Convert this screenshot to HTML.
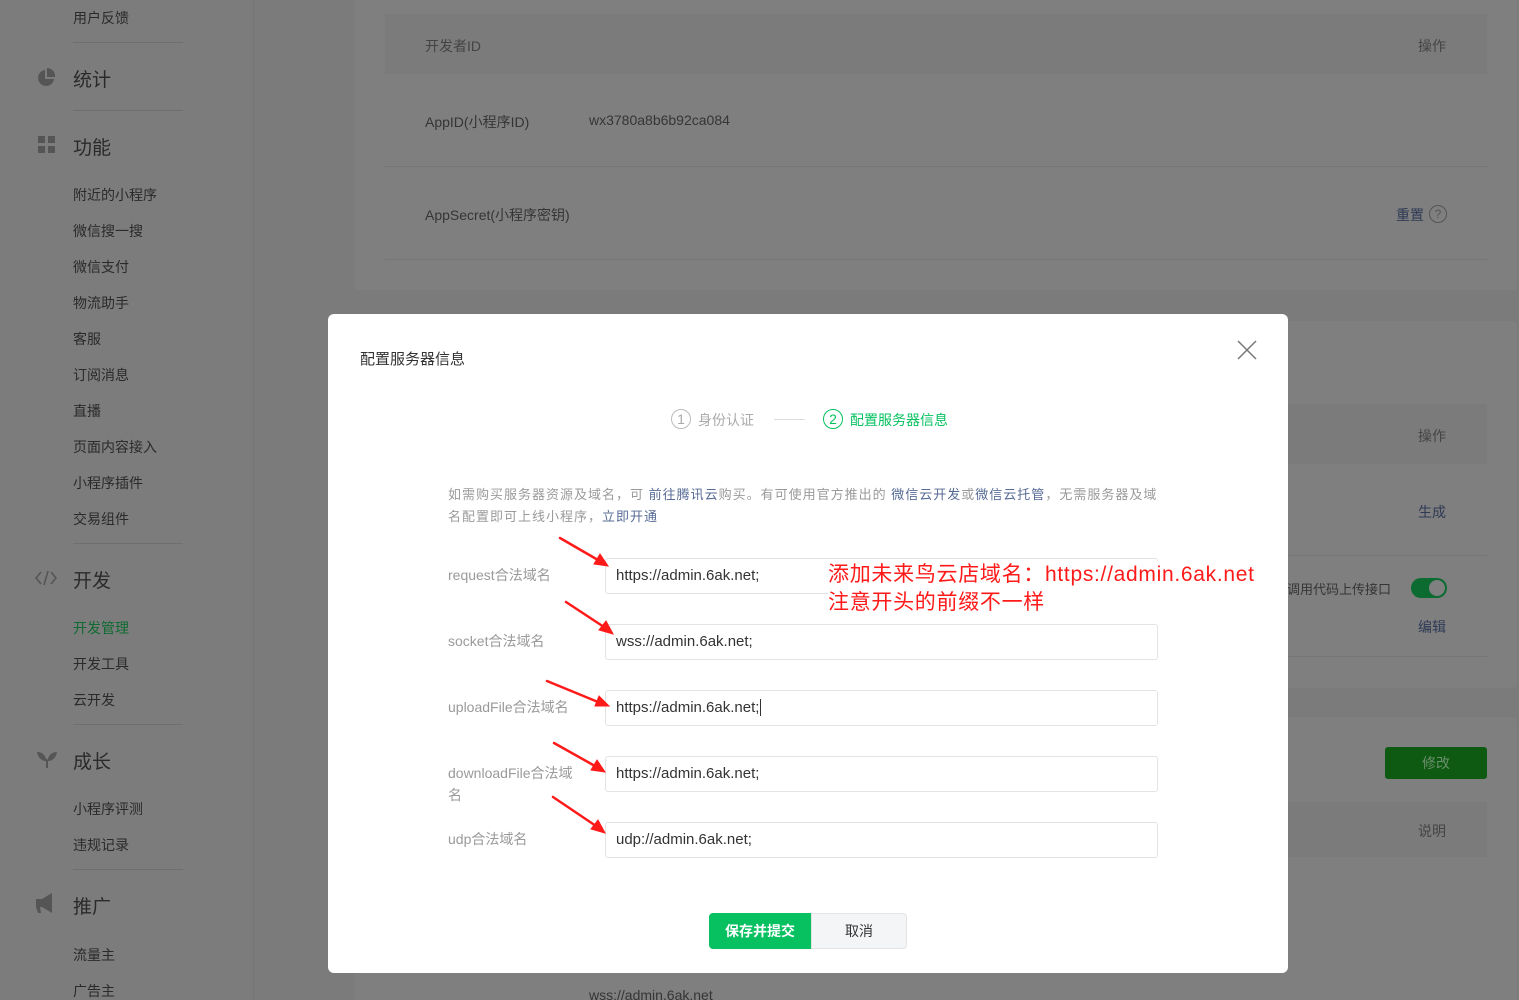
<!DOCTYPE html>
<html><head><meta charset="utf-8">
<style>
*{margin:0;padding:0;box-sizing:border-box}
html,body{width:1519px;height:1000px;overflow:hidden}
body{background:#7a7b7a;font-family:"Liberation Sans","Noto Sans CJK SC",sans-serif;position:relative;color:#2e2e2e}
.a{position:absolute;white-space:nowrap}
.side{position:absolute;left:0;top:0;width:254px;height:1000px;background:#7b7c7b;border-right:1px solid #747574}
.s{position:absolute;left:73px;font-size:14px;color:#2a2a2a}
.h{position:absolute;left:73px;font-size:19px;color:#2a2a2a}
.ln{position:absolute;left:73px;width:110px;height:1px;background:#6e6f6e}
.card{position:absolute;left:355px;width:1162px;background:#7f7f7f;border-radius:4px}
.hd{position:absolute;left:30px;width:1102px;background:#7a7b7a}
.t{font-size:14px;color:#353535}
.modal{position:absolute;left:328px;top:314px;width:960px;height:659px;background:#fff;border-radius:6px}
.lab{position:absolute;left:120px;font-size:14px;color:#9a9a9a;line-height:22px}
.inp{position:absolute;left:277px;width:553px;height:36px;border:1px solid #e3e3e3;border-radius:3px;font-size:15px;color:#333;padding-left:10px;line-height:34px}
.lk{color:#576b95}
</style></head><body>
<div class="side">
 <div class="s" style="top:8px">用户反馈</div>
 <div class="ln" style="top:42px"></div>
 <svg class="a" style="left:37px;top:68px" width="19" height="19" viewBox="0 0 19 19"><path d="M8 2A8 8 0 1 0 17 11H8Z" fill="#555"/><path d="M10 0A8 8 0 0 1 18 9H10Z" fill="#555"/></svg>
 <div class="h" style="top:65px">统计</div>
 <div class="ln" style="top:110px"></div>
 <svg class="a" style="left:38px;top:136px" width="18" height="18"><rect x="0" y="0" width="7" height="7" fill="#555"/><rect x="10" y="0" width="7" height="7" fill="#555"/><rect x="0" y="10" width="7" height="7" fill="#555"/><rect x="10" y="10" width="7" height="7" fill="#555"/></svg>
 <div class="h" style="top:133px">功能</div>
 <div class="s" style="top:185px">附近的小程序</div>
 <div class="s" style="top:221px">微信搜一搜</div>
 <div class="s" style="top:257px">微信支付</div>
 <div class="s" style="top:293px">物流助手</div>
 <div class="s" style="top:329px">客服</div>
 <div class="s" style="top:365px">订阅消息</div>
 <div class="s" style="top:401px">直播</div>
 <div class="s" style="top:437px">页面内容接入</div>
 <div class="s" style="top:473px">小程序插件</div>
 <div class="s" style="top:509px">交易组件</div>
 <div class="ln" style="top:543px"></div>
 <svg class="a" style="left:35px;top:570px" width="22" height="16"><path d="M6 2L1 8L6 14M16 2L21 8L16 14M13 1L9 15" stroke="#555" stroke-width="1.6" fill="none"/></svg>
 <div class="h" style="top:566px">开发</div>
 <div class="s" style="top:618px;color:#0f6b33">开发管理</div>
 <div class="s" style="top:654px">开发工具</div>
 <div class="s" style="top:690px">云开发</div>
 <div class="ln" style="top:724px"></div>
 <svg class="a" style="left:37px;top:751px" width="20" height="18"><path d="M0 1C6 1 9 5 9 10Z" fill="#555"/><path d="M20 1C14 1 11 5 11 10Z" fill="#555"/><path d="M0 1C1 7 5 10 9 10L9 17L11 17L11 10C15 10 19 7 20 1C16 3 12 5 10 9C8 5 4 3 0 1Z" fill="#555"/></svg>
 <div class="h" style="top:747px">成长</div>
 <div class="s" style="top:799px">小程序评测</div>
 <div class="s" style="top:835px">违规记录</div>
 <div class="ln" style="top:869px"></div>
 <svg class="a" style="left:36px;top:893px" width="20" height="21"><path d="M0 6H6L16 0V20L6 14H4L5 20H2L0 14Z" fill="#555"/></svg>
 <div class="h" style="top:892px">推广</div>
 <div class="s" style="top:945px">流量主</div>
 <div class="s" style="top:981px">广告主</div>
</div>

<div class="card" style="top:-4px;height:294px">
 <div class="hd" style="top:18px;height:60px"></div>
 <div class="a t" style="left:70px;top:40px;color:#444">开发者ID</div>
 <div class="a t" style="left:1063px;top:40px;color:#444">操作</div>
 <div class="a t" style="left:70px;top:116px">AppID(小程序ID)</div>
 <div class="a t" style="left:234px;top:116px">wx3780a8b6b92ca084</div>
 <div class="a" style="left:30px;top:170px;width:1102px;height:1px;background:#747574"></div>
 <div class="a t" style="left:70px;top:209px">AppSecret(小程序密钥)</div>
 <div class="a t" style="left:1041px;top:209px;color:#2f3a55">重置</div>
 <div class="a" style="left:1074px;top:209px;width:18px;height:18px;border:1px solid #555;border-radius:50%;font-size:12px;line-height:16px;text-align:center;color:#555">?</div>
 <div class="a" style="left:30px;top:263px;width:1102px;height:1px;background:#747574"></div>
</div>
<div class="card" style="top:321px;height:367px">
 <div class="hd" style="top:83px;height:60px"></div>
 <div class="a t" style="left:1063px;top:105px;color:#444">操作</div>
 <div class="a t" style="left:1063px;top:181px;color:#2f3a55">生成</div>
 <div class="a" style="left:30px;top:234px;width:1102px;height:1px;background:#747574"></div>
 <div class="a" style="left:932px;top:258px;font-size:13px;color:#353535">调用代码上传接口</div>
 <div class="a" style="left:1056px;top:257px;width:36px;height:20px;border-radius:10px;background:#0b6b31"><div style="position:absolute;right:2px;top:2px;width:16px;height:16px;border-radius:50%;background:#808080"></div></div>
 <div class="a t" style="left:1063px;top:296px;color:#2f3a55">编辑</div>
 <div class="a" style="left:30px;top:335px;width:1102px;height:1px;background:#747574"></div>
</div>
<div class="card" style="top:717px;height:290px">
 <div class="a" style="left:1030px;top:30px;width:102px;height:32px;background:#0e5a12;border-radius:3px;color:#6b8f6d;font-size:14px;text-align:center;line-height:32px">修改</div>
 <div class="hd" style="top:85px;height:55px"></div>
 <div class="a t" style="left:1063px;top:104px;color:#444">说明</div>
 <div class="a t" style="left:234px;top:270px">wss://admin.6ak.net</div>
</div>

<div class="modal">
 <div class="a" style="left:32px;top:34px;font-size:15px;color:#333">配置服务器信息</div>
 <svg class="a" style="left:909px;top:26px" width="20" height="20"><path d="M1 1L19 19M19 1L1 19" stroke="#777" stroke-width="1.5"/></svg>
 <div class="a" style="left:343px;top:95px;width:20px;height:20px;border:1px solid #bbb;border-radius:50%;font-size:14px;line-height:18px;text-align:center;color:#aaa">1</div>
 <div class="a" style="left:370px;top:96px;font-size:14px;color:#aaa">身份认证</div>
 <div class="a" style="left:446px;top:105px;width:31px;height:1px;background:#ddd"></div>
 <div class="a" style="left:495px;top:95px;width:20px;height:20px;border:1px solid #07c160;border-radius:50%;font-size:14px;line-height:18px;text-align:center;color:#07c160">2</div>
 <div class="a" style="left:522px;top:96px;font-size:14px;color:#07c160">配置服务器信息</div>
 <div class="a" style="left:120px;top:170px;font-size:13px;color:#9a9a9a;line-height:22px;letter-spacing:1px">如需购买服务器资源及域名，可 <span class="lk">前往腾讯云</span>购买。有可使用官方推出的 <span class="lk">微信云开发</span>或<span class="lk">微信云托管</span>，无需服务器及域<br>名配置即可上线小程序，<span class="lk">立即开通</span></div>
 <div class="lab" style="top:250px">request合法域名</div>
 <div class="inp" style="top:244px">https://admin.6ak.net;</div>
 <div class="lab" style="top:316px">socket合法域名</div>
 <div class="inp" style="top:310px">wss://admin.6ak.net;</div>
 <div class="lab" style="top:382px">uploadFile合法域名</div>
 <div class="inp" style="top:376px">https://admin.6ak.net;<span style="border-left:1px solid #333;margin-left:1px"></span></div>
 <div class="lab" style="top:448px;white-space:normal;width:134px;word-break:break-all">downloadFile合法域名</div>
 <div class="inp" style="top:442px">https://admin.6ak.net;</div>
 <div class="lab" style="top:514px">udp合法域名</div>
 <div class="inp" style="top:508px">udp://admin.6ak.net;</div>
 <div class="a" style="left:500px;top:247px;font-size:21px;color:#ff1a1a;line-height:28px;background:#fff;padding-right:2px;letter-spacing:0.7px">添加未来鸟云店域名：https://admin.6ak.net<br>注意开头的前缀不一样</div>
 <div class="a" style="left:381px;top:599px;width:102px;height:36px;background:#07c160;border-radius:4px 0 0 4px;color:#fff;font-size:14px;font-weight:bold;text-align:center;line-height:36px">保存并提交</div>
 <div class="a" style="left:483px;top:599px;width:96px;height:36px;background:#f4f5f7;border:1px solid #e3e3e3;border-radius:0 4px 4px 0;color:#333;font-size:14px;text-align:center;line-height:34px">取消</div>
</div>

<svg class="a" style="left:0;top:0" width="1519" height="1000">
 <g fill="#ff1a1a" stroke="#ff1a1a" stroke-linecap="round">
  <line x1="560" y1="538" x2="598" y2="560" stroke-width="2.5"/><polygon points="608,566 594,564 600,554"/>
  <line x1="566" y1="602" x2="604" y2="627" stroke-width="2.5"/><polygon points="613,634 599,630 606,621"/>
  <line x1="547" y1="681" x2="598" y2="702" stroke-width="2.5"/><polygon points="609,706 595,706 599,696"/>
  <line x1="554" y1="743" x2="595" y2="766" stroke-width="2.5"/><polygon points="605,772 591,770 597,760"/>
  <line x1="553" y1="797" x2="596" y2="826" stroke-width="2.5"/><polygon points="605,833 591,829 598,820"/>
 </g>
</svg>
</body></html>
